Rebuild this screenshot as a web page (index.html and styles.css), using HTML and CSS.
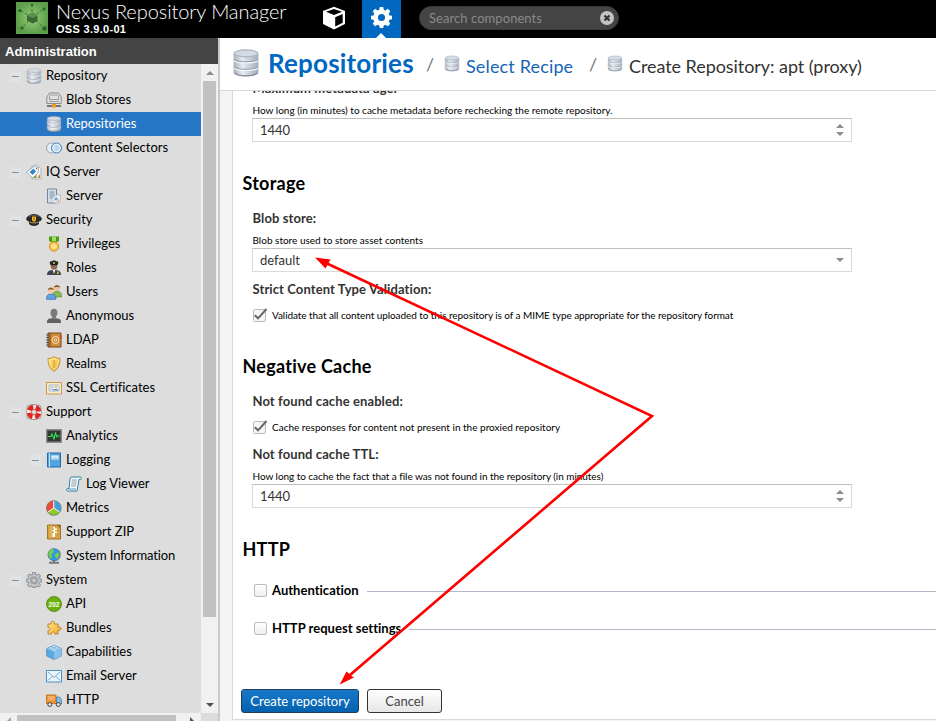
FILE: index.html
```
<!DOCTYPE html>
<html lang="en">
<head>
<meta charset="utf-8">
<title>Nexus Repository Manager</title>
<link rel="stylesheet" href="styles.css">
</head>
<body>
<svg class="defs" width="0" height="0" aria-hidden="true">
  <defs>
    <linearGradient id="steel" x1="0" x2="1" y1="0" y2="0">
      <stop offset="0" stop-color="#a9b3bf"/><stop offset=".35" stop-color="#e6ebf0"/><stop offset="1" stop-color="#a4afbb"/>
    </linearGradient>
    <linearGradient id="gold" x1="0" x2="1" y1="0" y2="1">
      <stop offset="0" stop-color="#ffe88a"/><stop offset="1" stop-color="#eda92a"/>
    </linearGradient>
    <radialGradient id="leaf"><stop offset="0" stop-color="#9ace78"/><stop offset="1" stop-color="#5c9f4b"/></radialGradient>
    <symbol id="db" viewBox="0 0 16 16">
      <path d="M1.200 2.700v10.500c0 1.500 3 2.100 6.800 2.100s6.800-.6 6.800-2.100V2.700z" fill="url(#steel)" stroke="#a3acb6" stroke-width=".5"/>
      <path d="M1.300 5.900c1 1.100 3.800 1.400 6.700 1.400s5.700-.3 6.700-1.400M1.300 10.200c1 1.100 3.800 1.400 6.700 1.400s5.700-.3 6.700-1.400" fill="none" stroke="#8e98a5" stroke-width=".6"/>
      <path d="M1.300 6.600c1 1.100 3.800 1.400 6.700 1.400s5.700-.3 6.700-1.400M1.300 10.900c1 1.100 3.800 1.400 6.700 1.400s5.700-.3 6.700-1.400" fill="none" stroke="#f6f8fa" stroke-width=".7"/>
      <path d="M1.400 13.500c1 1.400 3.600 1.800 6.600 1.800s5.600-.4 6.600-1.800" fill="none" stroke="#838c97" stroke-width=".7"/>
      <ellipse cx="8" cy="2.500" rx="6.700" ry="2" fill="#d3dbe4" stroke="#a8b2bd" stroke-width=".6"/>
    </symbol>
    <symbol id="blob" viewBox="0 0 16 16">
      <path d="M3.500 1h9L15.200 5v6.500H.8V5z" fill="#e2e2e2" stroke="#8a8a8a"/>
      <path d="M4.500 3h7l1.200 2v2.500H3.300V5zM3 9.500h10" fill="none" stroke="#9a9a9a"/>
      <path d="M1 14h14" stroke="#555" stroke-width="1.500"/><rect x="6" y="12" width="4" height="3.500" fill="#f39a1e"/>
    </symbol>
    <symbol id="rings" viewBox="0 0 16 16">
      <circle cx="5.500" cy="8" r="5" fill="#e9edf0" stroke="#9aa5ae"/>
      <circle cx="10.500" cy="8" r="5" fill="#b9d8f2" fill-opacity=".8" stroke="#3d7fc0"/>
      <circle cx="10.500" cy="8" r="3.800" fill="none" stroke="#fff" stroke-width=".7"/>
    </symbol>
    <symbol id="iq" viewBox="0 0 16 16">
      <path d="M5 3l5-2.300 5 4V15H6z" fill="#f4f4f4" stroke="#aaa" stroke-width=".8"/>
      <path d="M.5 8L8 2.500l4.500 1L12 9l-5.500 5z" fill="#fff" stroke="#999" stroke-width=".8"/>
      <path d="M3.500 8l4-3.500 2.500 3L6.500 11z" fill="#2f86c9"/><path d="M7 14l3.500-3.500V14z" fill="#56a82d"/><path d="M11.500 14l2.500-4v4z" fill="#e5752c"/><circle cx="10.500" cy="4.800" r=".8" fill="#666"/>
    </symbol>
    <symbol id="server" viewBox="0 0 16 16">
      <path d="M1.500 1h9v14h-9z" fill="#d2dfea" stroke="#70879d"/><path d="M3.500 4h5M3.500 6h5M3.500 8h5M3.500 10h3" stroke="#7790a8"/>
      <path d="M6 11l4-4h4.500l-.5 8H8z" fill="#eee" stroke="#aaa" stroke-width=".6"/><path d="M8 11l2.500-2 1.500 2-2 2z" fill="#6aa6d6"/><path d="M11 14l2-3v3z" fill="#e5905c"/>
    </symbol>
    <symbol id="cap" viewBox="0 0 16 16">
      <path d="M.1 6.500C1.500 3.500 5 2 8 2s6.500 1.500 7.900 4.500c0 2-1.900 3-2.900 3v2.500c-2.500 2.600-7.500 2.600-10 0V9.500C2 9.500.1 8.500.1 6.500z" fill="#292929"/>
      <path d="M2.500 5C5 2.800 11 2.800 13.500 5" fill="none" stroke="#777" stroke-width=".7"/><path d="M3.500 10.200c3 1 6 1 9 0" fill="none" stroke="#b49a42"/>
      <path d="M6 4.500h4v4L8 10 6 8.500z" fill="#f6bb22"/><path d="M8 5v3.500" stroke="#8b5f0b"/>
    </symbol>
    <symbol id="medal" viewBox="0 0 16 16">
      <path d="M3 .5h10v4.500L8 7.500 3 5z" fill="#4c9c12"/><path d="M6 1h4v4H6z" fill="#a6d96d"/>
      <circle cx="8" cy="10.500" r="4.700" fill="#f3c24a" stroke="#d89523"/><circle cx="8" cy="10.500" r="2.800" fill="#ffe28b"/>
    </symbol>
    <symbol id="officer" viewBox="0 0 16 16">
      <path d="M1 15c0-4 2.500-5 7-5s7 1 7 5z" fill="#3f454c"/><path d="M6.500 9.500h3L8 14z" fill="#f3f3f3"/>
      <circle cx="8" cy="6.500" r="3.200" fill="#96684c"/><path d="M3.500 2L8 .3 12.500 2l-1 3.200h-7z" fill="#20242a"/><path d="M7.200 2h1.600v2H7.200zM11 11.500h1.600V14H11z" fill="#f3be2c"/>
    </symbol>
    <symbol id="users" viewBox="0 0 16 16">
      <path d="M6.500 13c0-4 1-5.500 4.500-5.500s4.700 1.500 4.700 5.500z" fill="#87b957" stroke="#5a8c32" stroke-width=".7"/>
      <circle cx="11" cy="4" r="3" fill="#ecc197"/><path d="M7.700 4C8 .2 13.800.2 14.200 4l-1-1H9z" fill="#79501f"/>
      <path d="M.5 15.300c0-4 1.500-5.300 4.700-5.300s4.700 1.300 4.700 5.300z" fill="#61a3e0" stroke="#2f68b2" stroke-width=".7"/>
      <circle cx="5" cy="6.500" r="3" fill="#f3cda4"/><path d="M1.700 6.500c.3-4 6-4 6.500 0l-1-1H3z" fill="#8e5a23"/>
    </symbol>
    <symbol id="anon" viewBox="0 0 16 16">
      <path d="M8 .7c4.300 0 4.300 5.800 1.900 8v1.400c3.600.5 5.100 1.400 5.100 4.900H1c0-3.500 1.500-4.400 5.100-4.900V8.700C3.700 6.500 3.700.7 8 .7z" fill="#77797b"/><path d="M1 15c0-2 .5-3.200 1.500-4h11c1 .8 1.500 2 1.500 4z" fill="#5f6163"/>
    </symbol>
    <symbol id="book" viewBox="0 0 16 16">
      <path d="M2 1h13v14H2z" fill="#cf8b3e" stroke="#7a4615"/><path d="M4 1v14" stroke="#7a4615"/><path d="M.2 3h3M.2 5.500h3M.2 8h3M.2 10.500h3M.2 13h3" stroke="#555"/>
      <circle cx="9.500" cy="8" r="3.500" fill="none" stroke="#fbe3b4"/><circle cx="9.500" cy="8" r="1.200" fill="none" stroke="#fbe3b4"/><path d="M15 3v4" stroke="#e5321e"/>
    </symbol>
    <symbol id="shield" viewBox="0 0 16 16">
      <path d="M8 .7c2 1.300 4 1.800 6 1.800 0 5.500-1.500 10-6 12.800C3.500 12.500 2 8 2 2.500c2 0 4-.5 6-1.800z" fill="url(#gold)" stroke="#cf8f24"/>
      <path d="M8 2.500c1.500 1 3 1.300 4.500 1.400-.3 4-1.500 7.300-4.500 9.600-3-2.300-4.200-5.600-4.500-9.600C5 3.800 6.500 3.500 8 2.500z" fill="none" stroke="#fff3b5" stroke-width=".8"/><path d="M8 4v8" stroke="#d9972a"/>
    </symbol>
    <symbol id="cert" viewBox="0 0 16 16">
      <path d="M.5 2.500h15v11.500H.5z" fill="#fbeccc" stroke="#c9944b"/><path d="M3 5h10v6H3z" fill="#f5fafc" stroke="#94aac0" stroke-width=".8"/><path d="M4 7h4M4 9h3" stroke="#8b9bb0" stroke-width=".8"/><circle cx="10" cy="7" r="1.400" fill="#d9c173"/><path d="M7 9.800h5" stroke="#2e66b8"/>
    </symbol>
    <symbol id="buoy" viewBox="0 0 16 16">
      <rect x="1" y="1" width="14" height="14" rx="3" fill="none" stroke="#999"/><circle cx="8" cy="8" r="5" fill="none" stroke="#e2241d" stroke-width="4.800"/>
      <circle cx="8" cy="8" r="5" fill="none" stroke="#f8f0f0" stroke-width="4.200" stroke-dasharray="2.800 5.054" stroke-dashoffset="1.400"/><circle cx="8" cy="8" r="2.600" fill="#ddd" stroke="#b33" stroke-width=".6"/>
    </symbol>
    <symbol id="pulse" viewBox="0 0 16 16">
      <path d="M.7 1.700h14.600v12.600H.7z" fill="#323834" stroke="#8b8b8b" stroke-width="1.400"/><path d="M2 8.500h3l1-2.500 2 5 1.500-6 1.500 4 .8-1h2.500" fill="none" stroke="#35e157" stroke-width="1.100"/>
    </symbol>
    <symbol id="log" viewBox="0 0 16 16">
      <path d="M1.500 1h13v14h-13z" fill="#53a3e0" stroke="#236aa7"/><path d="M3.500 1v14" stroke="#c5e1f6"/><path d="M5.500 3.500h7v4h-7z" fill="#fff"/><path d="M6.500 5h5M6.500 6.500h5" stroke="#7fb1d9" stroke-width=".7"/>
    </symbol>
    <symbol id="scroll" viewBox="0 0 16 16">
      <path d="M5 1h9.500c1 0 1 2.500 0 2.500H13L11 15H1.500c-1.300 0-1.300-2.500 0-2.500H3L4 3z" fill="#f2f8fb" stroke="#337fac"/><path d="M6 4h5M5.700 6h5M5.300 8h5M5 10h5" stroke="#7a8d99" stroke-width=".8"/><path d="M2 13h8" stroke="#337fac" stroke-width=".8"/>
    </symbol>
    <symbol id="pie" viewBox="0 0 16 16">
      <circle cx="7.800" cy="8" r="7.300" fill="#8ccc28" stroke="#666" stroke-width=".8"/><path d="M7.800 8V1A7 7 0 0 1 13.600 12z" fill="#459de0"/><path d="M7.800 8V1A7 7 0 0 0 2 12z" fill="#ea4c3d"/><path d="M7.800 1v7l5.800 4M7.800 8L2 12" fill="none" stroke="#fff"/>
    </symbol>
    <symbol id="zip" viewBox="0 0 16 16">
      <path d="M1.500 1h13v14h-13z" fill="#d7a444" stroke="#a3742a"/><path d="M5 2v12" stroke="#efc97d" stroke-width="1"/><path d="M7 3h2v1.500h2V6H9v1.500h2V9H9v4H6.500V9H8V7.500H6.500V6H8V4.500H7z" fill="#fff"/><path d="M11 1l3.500 3.500V1z" fill="#8e6422"/>
    </symbol>
    <symbol id="globe" viewBox="0 0 16 16">
      <path d="M3 14.800h10M8 12v2" stroke="#777" stroke-width="2"/><circle cx="8" cy="6.700" r="6" fill="#2d9be8" stroke="#336fa5" stroke-width=".8"/><path d="M3 4c2-3 4-2.500 5-2l-1 3-2 1 1 3-1.500 2C2.500 9 2 6 3 4zM9 6l3-1.500 1.500 2L11 11 9.500 9z" fill="#7fd13b"/><path d="M12 1.500c3.500 3 3 9-1 11" fill="none" stroke="#8a8a8a"/>
    </symbol>
    <symbol id="gear" viewBox="0 0 16 16">
      <path d="M6.700.6h2.600l.4 2 1.300.5 1.700-1.100 1.800 1.800L13.400 5.500l.5 1.300 2 .4v2.600l-2 .4-.5 1.300 1.100 1.700-1.800 1.800-1.700-1.100-1.300.5-.4 1.200H6.700l-.4-1.200L5 13.900l-1.700 1.100-1.800-1.800 1.100-1.700-.5-1.300-1.900-.4V7.200l1.900-.4L2.600 5.500 1.500 3.800 3.300 2 5 3.100l1.300-.5z"/>
    </symbol>
    <symbol id="cog" viewBox="0 0 16 16"><use href="#gear" fill="#c3c5c7" stroke="#7f8285" stroke-width=".9"/><circle cx="8" cy="8.300" r="3.600" fill="#b0b3b6" stroke="#85888b" stroke-width=".7"/><circle cx="8" cy="8.300" r="1.700" fill="#e2e2e2" stroke="#85888b" stroke-width=".6"/></symbol>
    <symbol id="api" viewBox="0 0 16 16"><circle cx="8" cy="8" r="7.500" fill="#6cb10c" stroke="#478506" stroke-width=".8"/><text x="8" y="10.500" class="api-text">202</text></symbol>
    <symbol id="puzzle" viewBox="0 0 16 16"><path d="M2 4h3.200C4 .3 9.200.3 8.200 4H12v3.200c4-1.200 4 4 0 3V14H8.700c.8-3-3.700-3-3 0H2v-3.500c2.500.7 2.500-3.800 0-3z" fill="url(#gold)" stroke="#bf7826" stroke-width=".9"/></symbol>
    <symbol id="brick" viewBox="0 0 16 16"><path d="M.7 4.500L8 1.500l7.300 3V12L8 15.500.7 12z" fill="#5aa7e2" stroke="#4384bb" stroke-width=".7"/><path d="M.8 4.600L8 7.500l7.200-2.900L8 1.600z" fill="#a8d6f7"/><path d="M8 7.500l7.200-2.900v7.300L8 15.300z" fill="#88c1ed"/><ellipse cx="5" cy="4" rx="1.900" ry="1.100" fill="#dbf0ff" stroke="#4b93cb" stroke-width=".5"/><ellipse cx="10.800" cy="4" rx="1.900" ry="1.100" fill="#dbf0ff" stroke="#4b93cb" stroke-width=".5"/><ellipse cx="8" cy="2.300" rx="1.900" ry="1.100" fill="#dbf0ff" stroke="#4b93cb" stroke-width=".5"/></symbol>
    <symbol id="mail" viewBox="0 0 16 16"><path d="M.5 2.500h15v11.500H.5z" fill="#e9f5fc" stroke="#4e91c0"/><path d="M2 4l6 5.500L14 4M2 12.500l4-4M14 12.500l-4-4" fill="none" stroke="#6aa4cd"/></symbol>
    <symbol id="truck" viewBox="0 0 16 16"><path d="M.5 3h9.500v8.500H.5z" fill="#f0963a" stroke="#b96517" stroke-width=".8"/><path d="M2 5h6.500M2 7h6.500" stroke="#fac98f"/><path d="M10.500 5h3l2 3v4h-5z" fill="#82bde9" stroke="#3f79ad" stroke-width=".8"/><circle cx="3.800" cy="12.500" r="2" fill="#ddd" stroke="#444"/><circle cx="12.300" cy="12.500" r="2" fill="#ddd" stroke="#444"/></symbol>
  </defs>
</svg>

<header class="topbar">
  <svg class="logo" viewBox="0 0 32 32">
    <rect width="32" height="32" fill="url(#leaf)"/>
    <path d="M16 15L5 9M16 15L28 7M16 15L6 26M16 15l12 11M16 15V3" stroke="#447538" stroke-width="1" stroke-dasharray="3 2"/>
    <path d="M11 13.500l5.500-3 5 3v5.500L16.500 21.500l-5.500-3z" fill="#3a6932"/><path d="M11 13.500l5.500-3 5 3-5 2.500z" fill="#5d9150"/>
    <g fill="#345c2c"><circle cx="4" cy="8.500" r="1.600"/><circle cx="28" cy="7" r="1.400"/><circle cx="6" cy="26" r="1.600"/><circle cx="28.500" cy="26.500" r="2.200"/><circle cx="16" cy="3" r="1.300"/></g>
  </svg>
  <div class="brand"><div class="brand-name">Nexus Repository Manager</div><div class="brand-version">OSS 3.9.0-01</div></div>
  <div class="mode"><svg class="mode-cube" viewBox="0 0 24 24"><path d="M12 .8L23 5v13l-11 5.500L1 18V5z" fill="#fff"/><path d="M4 5.800L12 3l8 2.800L12 9z" fill="#000"/><path d="M13.200 11.300l7.500-3.200v8.700l-7.500 3.800z" fill="#000"/></svg></div>
  <div class="mode mode-active"><svg class="mode-gear" viewBox="0 0 16 16"><path fill="#fff" fill-rule="evenodd" d="M6.700 0h2.600l.4 2 1.400.6 1.700-1.200 1.900 1.900-1.200 1.700.6 1.400 1.900.3v2.600l-1.900.4-.6 1.400 1.200 1.700-1.900 1.900-1.700-1.200-1.400.6-.4 1.900H6.700l-.4-1.900-1.400-.6-1.700 1.200-1.900-1.900 1.200-1.700-.6-1.400L0 9.300V6.700l1.900-.3L2.500 5 1.300 3.300l1.900-1.900 1.700 1.200L6.300 2zM8 5.300a2.700 2.700 0 1 0 0 5.400 2.700 2.700 0 0 0 0-5.400z"/></svg></div>
  <div class="search"><span>Search components</span><svg class="clear" viewBox="0 0 14 14"><circle cx="7" cy="7" r="7" fill="#c4c4c4"/><path d="M4.500 4.500l5 5M9.500 4.500l-5 5" stroke="#333" stroke-width="2.200"/></svg></div>
</header>

<div class="body">
  <aside class="sidebar">
    <div class="side-title">Administration</div>
    <div class="tree-wrap">
      <ul class="tree">
        <li><i class="toggle"></i><svg><use href="#db"/></svg><span>Repository</span></li>
        <li class="l2"><svg><use href="#blob"/></svg><span>Blob Stores</span></li>
        <li class="l2 selected"><svg><use href="#db"/></svg><span>Repositories</span></li>
        <li class="l2"><svg><use href="#rings"/></svg><span>Content Selectors</span></li>
        <li><i class="toggle"></i><svg><use href="#iq"/></svg><span>IQ Server</span></li>
        <li class="l2"><svg><use href="#server"/></svg><span>Server</span></li>
        <li><i class="toggle"></i><svg><use href="#cap"/></svg><span>Security</span></li>
        <li class="l2"><svg><use href="#medal"/></svg><span>Privileges</span></li>
        <li class="l2"><svg><use href="#officer"/></svg><span>Roles</span></li>
        <li class="l2"><svg><use href="#users"/></svg><span>Users</span></li>
        <li class="l2"><svg><use href="#anon"/></svg><span>Anonymous</span></li>
        <li class="l2"><svg><use href="#book"/></svg><span>LDAP</span></li>
        <li class="l2"><svg><use href="#shield"/></svg><span>Realms</span></li>
        <li class="l2"><svg><use href="#cert"/></svg><span>SSL Certificates</span></li>
        <li><i class="toggle"></i><svg><use href="#buoy"/></svg><span>Support</span></li>
        <li class="l2"><svg><use href="#pulse"/></svg><span>Analytics</span></li>
        <li class="l2t"><i class="toggle"></i><svg><use href="#log"/></svg><span>Logging</span></li>
        <li class="l3"><svg><use href="#scroll"/></svg><span>Log Viewer</span></li>
        <li class="l2"><svg><use href="#pie"/></svg><span>Metrics</span></li>
        <li class="l2"><svg><use href="#zip"/></svg><span>Support ZIP</span></li>
        <li class="l2"><svg><use href="#globe"/></svg><span class="tight">System Information</span></li>
        <li><i class="toggle"></i><svg><use href="#cog"/></svg><span>System</span></li>
        <li class="l2"><svg><use href="#api"/></svg><span>API</span></li>
        <li class="l2"><svg><use href="#puzzle"/></svg><span>Bundles</span></li>
        <li class="l2"><svg><use href="#brick"/></svg><span>Capabilities</span></li>
        <li class="l2"><svg><use href="#mail"/></svg><span>Email Server</span></li>
        <li class="l2"><svg><use href="#truck"/></svg><span>HTTP</span></li>
      </ul>
      <div class="vbar"><i class="up"></i><div class="vthumb"></div><i class="down dark"></i></div>
      <div class="hbar"><i class="left"></i><div class="hthumb"></div><i class="right"></i></div>
      <div class="corner"></div>
    </div>
  </aside>

  <main class="main">
    <nav class="crumbs">
      <svg class="crumb-big"><use href="#db"/></svg><h1>Repositories</h1>
      <span class="slash">/</span><svg class="crumb-icon"><use href="#db"/></svg><a class="crumb-recipe">Select Recipe</a>
      <span class="slash slash-2">/</span><svg class="crumb-icon"><use href="#db"/></svg><span class="crumb-current">Create Repository: apt (proxy)</span>
    </nav>
    <div class="viewport">
      <form class="panel">
        <section class="fields">
          <label class="label first">Maximum metadata age:</label>
          <p class="help">How long (in minutes) to cache metadata before rechecking the remote repository.</p>
          <div class="input"><span>1440</span><div class="spin"><i class="up"></i><i class="down"></i></div></div>
        </section>
        <h2>Storage</h2>
        <section class="fields">
          <label class="label">Blob store:</label>
          <p class="help">Blob store used to store asset contents</p>
          <div class="input"><span>default</span><div class="spin"><i class="down"></i></div></div>
          <label class="label after">Strict Content Type Validation:</label>
          <div class="check"><svg viewBox="0 0 15 15"><rect class="box" x=".5" y="1.500" width="12" height="12" rx="1"/><path class="tick" d="M1.800 7.300l3.200 3L13.500 1"/></svg><span class="fit-mime">Validate that all content uploaded to this repository is of a MIME type appropriate for the repository format</span></div>
        </section>
        <h2 class="negative">Negative Cache</h2>
        <section class="fields">
          <label class="label">Not found cache enabled:</label>
          <div class="check"><svg viewBox="0 0 15 15"><rect class="box" x=".5" y="1.500" width="12" height="12" rx="1"/><path class="tick" d="M1.800 7.300l3.200 3L13.500 1"/></svg><span>Cache responses for content not present in the proxied repository</span></div>
          <label class="label ttl">Not found cache TTL:</label>
          <p class="help help-ttl">How long to cache the fact that a file was not found in the repository (in minutes)</p>
          <div class="input"><span>1440</span><div class="spin"><i class="up"></i><i class="down"></i></div></div>
        </section>
        <h2>HTTP</h2>
        <div class="group"><i class="box-empty"></i><b>Authentication</b><hr></div>
        <div class="group"><i class="box-empty"></i><b>HTTP request settings</b><hr></div>
        <div class="actions"><button type="button" class="btn primary">Create repository</button><button type="button" class="btn">Cancel</button></div>
      </form>
    </div>
  </main>
</div>

<svg class="arrows" viewBox="0 0 936 721">
  <path d="M326 263L652 416L350 675" fill="none" stroke="#f00" stroke-width="2.600"/>
  <path d="M315 257.500L330.500 259.500L325.500 268.500zM339.700 684.500L354.500 677.300L353 677L346.500 671.500z" fill="#f00"/>
</svg>
</body>
</html>
```
FILE: styles.css
```
* { box-sizing: border-box; }

body {
  margin: 0;
  height: 721px;
  overflow: hidden;
  display: flex;
  flex-direction: column;
  background: #fff;
  color: #000;
  font: 13px/16px Lato, "Liberation Sans", sans-serif;
  font-variant-ligatures: none;
}

svg { display: block; flex: none; }
.defs { position: absolute; }
h1, h2, p, ul { margin: 0; padding: 0; }

/* Triangles shared by scrollbars and field triggers */
.up, .down { display: block; border: 4px solid transparent; border-top-width: 0; border-bottom: 4px solid #8c8c8c; }
.down { border-top: 4px solid #8c8c8c; border-bottom-width: 0; }
.down.dark { border-top-color: #505050; }
.left { border: 4px solid transparent; border-right-color: #a3a3a3; border-left-width: 0; }
.right { border: 4px solid transparent; border-left-color: #505050; border-right-width: 0; }

/* Header */
.topbar { display: flex; height: 38px; flex: none; background: #000; color: #fff; }
.logo { width: 32px; height: 32px; margin: 2px 8px 0 16px; }
.brand { width: 258px; }
.brand-name { font-size: 20px; line-height: 22px; font-weight: 300; white-space: nowrap; margin-bottom: 1px; letter-spacing: -.08px; }
.brand-version { font: bold 11px/13px "Liberation Sans", sans-serif; letter-spacing: .3px; }
.mode { position: relative; width: 48px; display: flex; justify-content: center; padding-top: 6px; }
.mode-cube { width: 24px; height: 24px; margin-left: -9px; }
.mode-active { width: 39px; background: #0068c0; padding-top: 7px; }
.mode-active::after { content: ""; position: absolute; bottom: 0; left: 14px; border: 5px solid transparent; border-top: 0; border-bottom-color: #fff; }
.mode-gear { width: 21px; height: 21px; }
.search { width: 200px; height: 24px; margin: 6px 0 0 18px; padding: 0 4px 0 9px; border-radius: 12px; background: #444; border: 1px solid #383838; color: #898989; display: flex; align-items: center; justify-content: space-between; }
.search span { letter-spacing: .06px; }
.clear { width: 14px; height: 14px; }

.body { flex: 1; display: flex; min-height: 0; }

/* Sidebar */
.sidebar { width: 220px; border-right: 2px solid #c9c9c9; display: flex; flex-direction: column; }
.side-title { height: 26px; flex: none; padding-left: 5px; background: #444; color: #fff; font: bold 13px/27px "Liberation Sans", sans-serif; }
.tree-wrap { flex: 1; min-height: 0; display: grid; grid-template: 649px 1fr / 201px 17px; background: #ddd; overflow: hidden; }
.tree { list-style: none; overflow: hidden; }
.tree li { height: 24px; display: flex; align-items: center; padding-left: 10px; white-space: nowrap; }
.tree li > svg { width: 16px; height: 16px; margin-right: 4px; }
.tree li > span { padding-bottom: 2px; }
.tree .tight { letter-spacing: -.1px; }
.tree .l2 { padding-left: 46px; }
.tree .l2t { padding-left: 30px; }
.tree .l3 { padding-left: 66px; }
.tree .selected { background: #2676c5; color: #fff; }
.toggle { width: 11px; height: 11px; margin-right: 5px; background: linear-gradient(#8a8f94, #8a8f94) center / 7px 1px no-repeat #dfe3e6; }
.api-text { font: bold 6.500px "Liberation Sans", sans-serif; fill: #fff; text-anchor: middle; }
.vbar { background: #f1f1f1; display: flex; flex-direction: column; align-items: center; padding: 7px 0 6px; }
.vthumb { width: 13px; height: 536px; margin: 6px 0 auto; background: #c1c1c1; }
.hbar { height: 17px; background: #f1f1f1; display: flex; align-items: flex-start; padding: 4px 7px 0; }
.hthumb { width: 159px; height: 13px; margin: -2px auto 0 6px; background: #c1c1c1; }
.corner { background: #dcdcdc; }

/* Breadcrumb */
.main { flex: 1; min-width: 0; display: flex; flex-direction: column; }
.crumbs { height: 53px; flex: none; display: flex; align-items: center; border-bottom: 1px solid #d9d9d9; white-space: nowrap; font-size: 18px; padding: 0 0 2px 12px; }
.crumb-big { width: 28px; height: 30px; }
h1 { width: 147px; margin-left: 8px; font-size: 26px; line-height: 30px; color: #0068c0; letter-spacing: .18px; }
.slash { margin: 2px 0 0 11px; width: 18px; color: #777; }
.slash-2 { margin-left: 14px; }
.crumb-icon { width: 16px; height: 17px; margin-right: 6px; }
.crumb-recipe { width: 109px; color: #1565b4; padding-top: 5px; letter-spacing: .15px; }
.crumb-current { color: #333; padding-top: 5px; letter-spacing: -.06px; }

/* Form */
.viewport { flex: 1; min-height: 0; overflow: hidden; background: #f3f3f3; padding-left: 12px; }
.panel { height: 629px; background: #fff; border: solid #d9d9d9; border-width: 0 0 1px 1px; overflow: hidden; }
h2 { font-size: 18px; line-height: 22px; margin: 30px 0 16px 9.500px; letter-spacing: .25px; }
h2.negative { margin-top: 32px; }
.fields { width: 619px; padding-left: 19px; display: flex; flex-direction: column; }
.label { font-weight: bold; color: #333; letter-spacing: .1px; padding-left: .5px; }
.label.first { margin-top: -11px; }
.label.after { margin-top: 9px; }
.label.ttl { margin-top: 11px; }
.help { height: 15px; margin-top: 7px; padding-left: .5px; font-size: 10px; line-height: 15px; white-space: nowrap; }
.help-ttl { letter-spacing: -.05px; }
.input { height: 24px; border: 1px solid #d9d9d9; border-top-color: #bfbfbf; padding: 0 7px 0 7px; display: flex; align-items: center; justify-content: space-between; color: #333; }
.spin { display: flex; flex-direction: column; gap: 4px; }
.check { height: 15px; margin-top: 11px; display: flex; align-items: center; font-size: 10px; white-space: nowrap; }
.check span { padding-bottom: 2px; }
.check svg { width: 15px; height: 15px; margin: 0 4px 0 1px; }
.fit-mime { letter-spacing: -.07px; }
.box { fill: #f5f5f5; stroke: #b9b9b9; }
.tick { fill: none; stroke: #666; stroke-width: 2; }
.group { height: 15px; margin: 0 0 23px 19px; display: flex; align-items: center; }
h2 + .group { margin-top: 23px; }
.box-empty { width: 13px; height: 13px; margin: 0 5px 0 2px; border: 1px solid #bbb; border-radius: 2px; background: linear-gradient(#fff, #eee); }
.group b { letter-spacing: .02px; padding-bottom: 1px; }
.group hr { flex: 1; margin: 1px 0 0 8px; border: 0; border-top: 1px solid #b5b8c8; }
.actions { margin: 53px 0 0 8px; display: flex; gap: 8px; }
.btn { width: 75px; height: 24px; padding: 0; border: 1px solid #333; border-radius: 3px; background: linear-gradient(#fff, #e6e6e6); color: #444; font: inherit; }
.btn.primary { width: 118px; background: linear-gradient(#1878c8, #0461ae); border-color: #1f3d59; color: #fff; }

/* Annotation */
.arrows { position: absolute; left: 0; top: 0; width: 936px; height: 721px; pointer-events: none; }
```
